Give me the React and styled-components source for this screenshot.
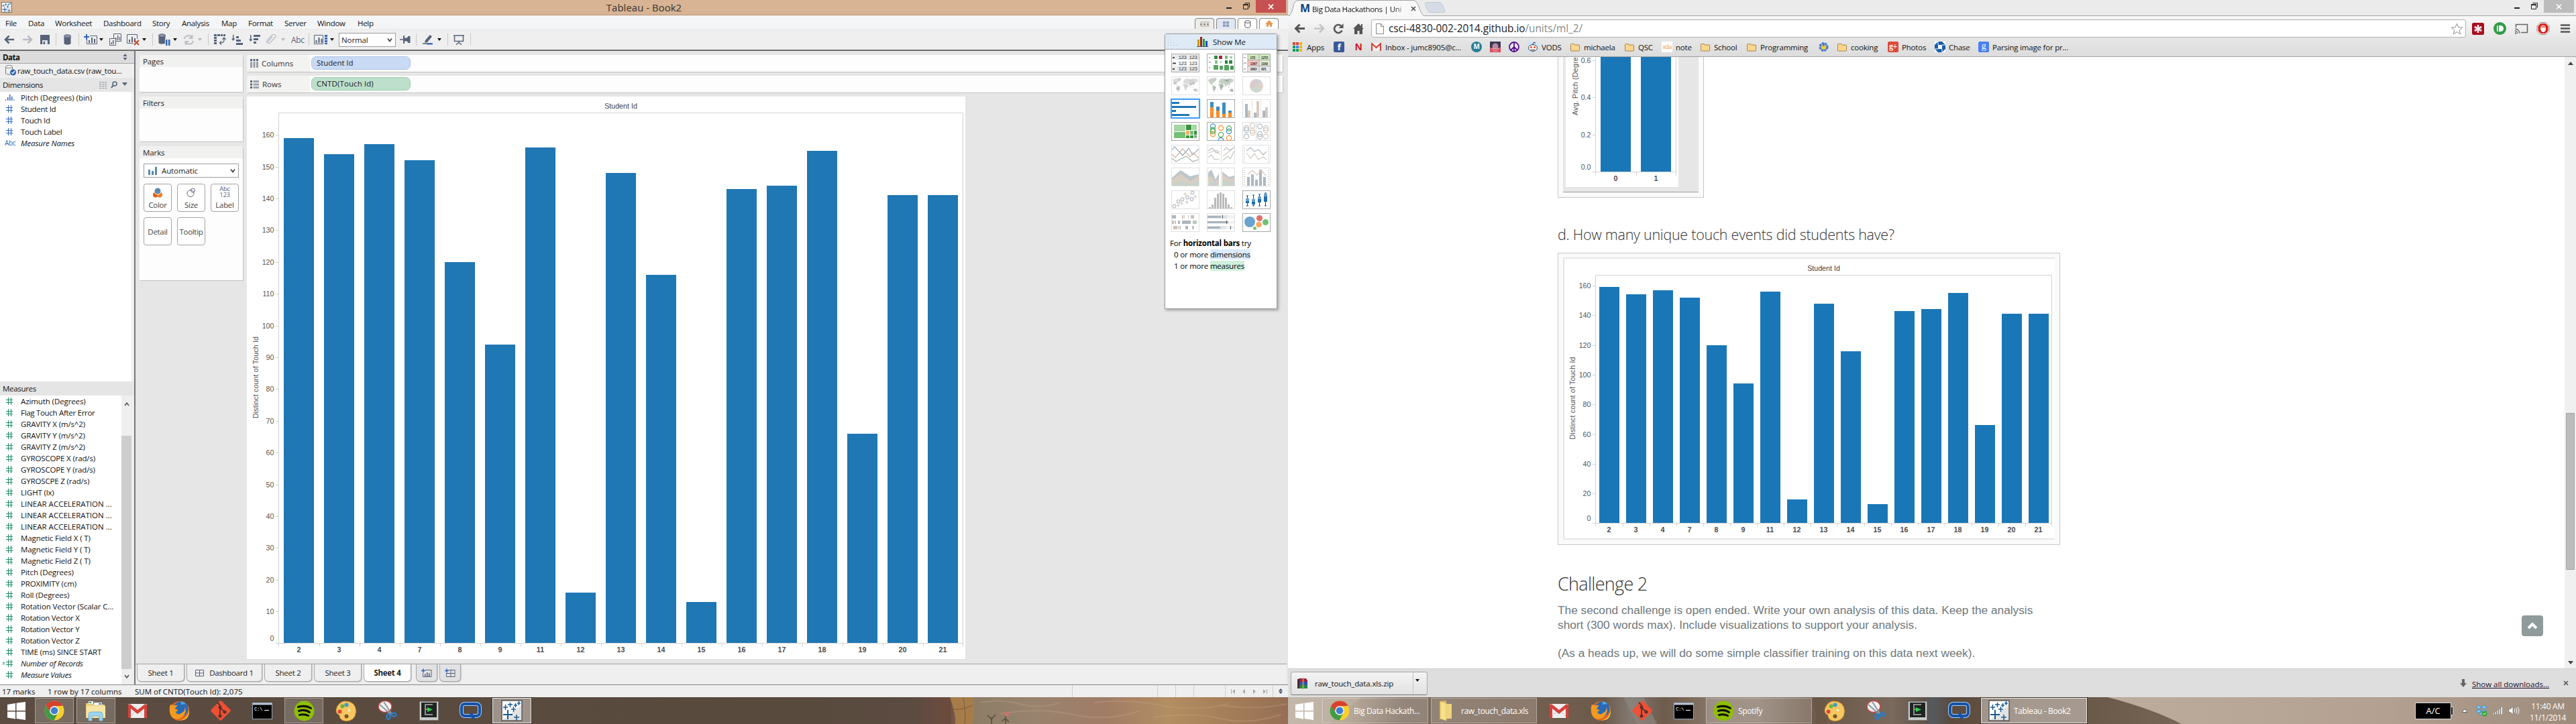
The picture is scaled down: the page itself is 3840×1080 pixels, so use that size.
import React from "react";
import styled, { createGlobalStyle, css } from "styled-components";

const Global = createGlobalStyle`
  * { box-sizing: border-box; }
  body { margin: 0; background: #fff; overflow: hidden; }
  svg { display: block; flex: none; }
`;

const ui = `"Open Sans", "Noto Sans", sans-serif`;
const arial = `"Liberation Sans", Arial, sans-serif`;

/* ---------- shell ---------- */
const Desktop = styled.div`
  display: flex; width: 3840px; height: 1080px; overflow: hidden;
  font: 11.5px/17px ${ui}; letter-spacing: -0.3px; color: #111; white-space: nowrap;
`;
const Monitor = styled.div`
  width: 1920px; height: 1080px; display: flex; flex-direction: column; position: relative;
`;
const Spacer = styled.div`flex: 1;`;

/* ---------- window buttons ---------- */
const WinButtons = styled.div`
  display: flex; height: 19px; align-items: center; margin-left: auto; align-self: flex-start;
`;
const CloseBox = styled.div`
  width: 45px; height: 19px; background: ${(p) => p.$bg}; display: flex; align-items: center; justify-content: center;
`;
const WindowControls = ({ bg }) => (
  <WinButtons>
    <svg width="44" height="19">
      <rect x="0" y="11" width="8" height="2" fill="#222" />
      <path d="M25.500 6.500h7v7h-7z M25.500 7.500h7 M27.500 4.500h7v7" fill="none" stroke="#222" />
    </svg>
    <CloseBox $bg={bg}>
      <svg width="9" height="8"><path d="M1 .5L8 7.500M8 .5L1 7.500" stroke="#fff" strokeWidth="1.700" /></svg>
    </CloseBox>
  </WinButtons>
);

/* ---------- Tableau chrome ---------- */
const TitleBar = styled.div`
  height: 23px; flex: none; background: #d8b494; border-bottom: 1px solid #b99678;
  display: flex; align-items: center; padding: 0 3px 0 2px;
`;
const Title = styled.div`
  flex: 1; text-align: center; font-size: 14.800px; letter-spacing: 0.1px; color: #333; padding-left: 74px;
`;
const MenuBar = styled.div`
  height: 20px; flex: none; background: #f4f5f7; display: flex; align-items: center; padding: 2px 14px 0 8px;
`;
const MenuItem = styled.div`width: ${(p) => p.$w}px;`;
const CornerTabs = styled.div`display: flex; gap: 3px; margin-left: auto; align-self: flex-end;`;
const CornerTab = styled.div`
  width: 29px; height: 16px; border: 1px solid #8a877f; border-bottom: 0; border-radius: 4px 4px 0 0;
  background: ${(p) => p.$bg}; display: flex; align-items: center; justify-content: center;
`;
const ToolBar = styled.div`
  height: 33px; flex: none; background: #efefef; border-top: 1px solid #e9e9e9; border-bottom: 2px solid #706c6f;
  display: flex; align-items: center;
`;
const Tool = styled.div`margin-left: ${(p) => p.$ml}px; flex: none; ${(p) => p.$dim && "opacity:.35;"}`;
const Sep = styled.div`margin-left: ${(p) => p.$ml}px; width: 1px; height: 18px; background: #c9c9c9;`;
const AbcTool = styled.div`margin-left: ${(p) => p.$ml}px; color: #56637a; width: 21px; font-size: 12px;`;
const Caret = styled.div`
  margin-left: ${(p) => p.$ml}px; width: 0; height: 0; border: 3px solid transparent;
  border-top: 4px solid ${(p) => (p.$dim ? "#b5b5b5" : "#111")}; border-bottom: 0;
`;
const Select = styled.div`
  margin-left: ${(p) => p.$ml || 0}px; width: ${(p) => p.$w}px; height: 21px; border: 1px solid #9b9da1; background: #fff;
  display: flex; align-items: center; justify-content: space-between; padding: 0 4px 0 ${(p) => p.$pl || 3}px;
  color: #222; letter-spacing: -0.1px;
`;
const SelectLabel = styled.div`display: flex; align-items: center; gap: 6px;`;
const Chevron = () => (
  <svg width="8" height="7"><path d="M1 1.500L4 5.500L7 1.500" fill="none" stroke="#444" strokeWidth="1.700" /></svg>
);

const S = "#56637a";
const BLUE = "#2f66b8";
const miniBars = (x, y, c = S) => (
  <g fill={c}>
    <rect x={x} y={y + 4} width="2" height="4" />
    <rect x={x + 4} y={y} width="2" height="8" />
    <rect x={x + 8} y={y + 2} width="2" height="6" />
  </g>
);
const Arrow = ({ flip }) => (
  <svg width="16" height="14">
    <path d={flip ? "M1 7H14M8.500 1.500L14 7L8.500 12.500" : "M15 7H2M7.500 1.500L2 7L7.500 12.500"} fill="none" stroke={S} strokeWidth="2.600" />
  </svg>
);
const Cyl = ({ pause }) => (
  <svg width={pause ? 18 : 12} height={pause ? 19 : 16}>
    <path d="M0.500 3.500v10c0 3 10 3 10 0v-10z" fill={S} />
    <ellipse cx="5.500" cy="3" rx="5" ry="2.200" fill="#8a94a5" stroke={S} />
    {pause && <path d="M10 8h8v11h-8z" fill="#efefef" />}
    {pause && <path d="M11 9h2.500v9H11zM15 9h2.500v9H15z" fill={BLUE} />}
  </svg>
);
const ToolIcons = {
  save: (
    <svg width="14" height="14"><path d="M0 0h14v14H0z" fill={S} /><path d="M3 8h8v6H3z" fill="#dfe3ea" /><path d="M4.500 10h2.500v4H4.500z" fill={S} /></svg>
  ),
  newSheet: (
    <svg width="21" height="18">
      <path d="M9 3.500h10.500v12H4.500V9" fill="none" stroke={S} />{miniBars(7, 6)}
      <path d="M0 5h8M4 1v8" stroke={BLUE} strokeWidth="2" />
    </svg>
  ),
  dup: (
    <svg width="18" height="18">
      <path d="M6.500 .5h11v11h-11z" fill="#efefef" stroke={S} />
      <path d="M9 6h1.500v4H9zM12 3h1.500v7H12zM15 5h1.200v5H15z" fill={S} />
      <path d="M.5 7.500h9v10h-9z" fill="#efefef" stroke={S} />
      <path d="M2.500 13H4v3H2.500zM5 10h1.500v6H5z" fill={S} />
    </svg>
  ),
  clear: (
    <svg width="20" height="18">
      <path d="M15.500 8V1.500H.5v13H10" fill="none" stroke={S} />{miniBars(3, 5)}
      <path d="M11 10l7 7M18 10l-7 7" stroke="#c04a2c" strokeWidth="2" />
    </svg>
  ),
  refresh: (
    <svg width="17" height="15"><path d="M2 6a6 6 0 0 1 11-2M15 9a6 6 0 0 1-11 2M13.500 0v5h-5M3.500 15v-5h5" fill="none" stroke={S} strokeWidth="2" /></svg>
  ),
  swap: (
    <svg width="18" height="16" fill={S}>
      <path d="M0 0h4v3H0zM5 0h4v3H5zM10 0h3v3h-3zM14 0h3v3h-3zM0 4h4v3H0zM0 8h4v3H0zM0 12h4v3H0z" />
      <path d="M15 5v4q0 4-6 4M12.500 8L15 5l2.500 3M11 10.500L8.500 13l2.500 2.500" fill="none" stroke={S} strokeWidth="1.300" />
    </svg>
  ),
  asc: (
    <svg width="18" height="15" fill={S}><path d="M3 0h1.500v7H3zM1 5.500h5.500L3.700 9zM8 2h4v3H8zM8 7h7v3H8zM8 12h10v3H8z" /></svg>
  ),
  desc: (
    <svg width="18" height="15" fill={S}><path d="M3 0h1.500v9H3zM1 6.500h5.500L3.700 10zM8 0h10v3H8zM8 5h7v3H8zM8 10h4v3H8z" /></svg>
  ),
  clip: (
    <svg width="16" height="16"><path d="M10 3.500L3.500 11a1.800 1.800 0 0 0 2.500 2.500L14 5a2.600 2.600 0 0 0-4-4L2 9.500a3.500 3.500 0 0 0 0 4" fill="none" stroke={S} strokeWidth="1.300" /></svg>
  ),
  fit: (
    <svg width="20" height="16">
      <path d="M.5 1.500h13v13H.5z" fill="none" stroke={S} />{miniBars(2.500, 5)}
      <path d="M16 1h4v3h-4zM16 5h4v3h-4zM16 9h4v3h-4zM16 13h4v2h-4z" fill={BLUE} />
    </svg>
  ),
  pin: (
    <svg width="16" height="12" fill={S}><path d="M0 5.300h5v1.500H0zM5 0h2v12H5zM7 3.500h5v5H7zM11 2.500h1.500v7H11zM12 1h3.500v10H12z" /></svg>
  ),
  marker: (
    <svg width="16" height="16"><path d="M3 13L4 9L11 1l3 2.500L7 12z" fill={S} /><path d="M0 14h14" stroke={S} strokeWidth="1.500" /><path d="M6 14.500h9" stroke={BLUE} strokeWidth="2" /></svg>
  ),
  present: (
    <svg width="16" height="15"><path d="M0 1h16M1.500 1.500v8h13v-8M8 10v2M4 14.500l4-3l4 3" fill="none" stroke={S} strokeWidth="1.500" /></svg>
  ),
};

const TableauLogo = ({ w, h }) => (
  <svg width={w} height={h} viewBox="0 0 32 32" preserveAspectRatio="none">
    <rect x="1" y="1" width="30" height="30" fill="#fdfdfd" stroke="#555" strokeWidth="1.500" />
    <path d="M2 30L30 8v22z" fill="#e2e2e2" />
    <path d="M3 22h14M10 15v14" stroke="#1a5a94" strokeWidth="2" fill="none" />
    <path d="M19 26h8M23 22v9M3 11h7M6.500 7v8M10 7h7M13.500 4v7M15 14h7M18.500 10v8M19 8h5M21.500 5v6M24 5h5M26.500 2v6" stroke="#1a5a94" strokeWidth="1.500" fill="none" />
  </svg>
);

/* ---------- Tableau body ---------- */
const Body = styled.div`display: flex; flex: none; height: 945px;`;
const DataPane = styled.div`
  width: 202px; flex: none; background: #efefef; border-right: 2px solid #77777b; display: flex; flex-direction: column;
`;
const PaneHead = styled.div`
  height: ${(p) => p.$h}px; flex: none; background: ${(p) => p.$bg}; padding: 0 10px 0 4px; display: flex; align-items: center;
  ${(p) => p.$bold && "font-weight: 700; border-bottom: 1px solid #a5a5a5; letter-spacing:-.45px;"}
`;
const SourceRow = styled.div`height: 21px; flex: none; display: flex; align-items: center; padding-left: 8px; gap: 1px; letter-spacing: -0.25px;`;
const FieldList = styled.div`
  height: ${(p) => p.$h}px; flex: none; width: 196px; background: #fff; display: flex; justify-content: space-between;
`;
const Field = styled.div`
  height: 17px; display: flex; align-items: center; font-style: ${(p) => (p.$i ? "italic" : "normal")};
  letter-spacing: ${(p) => p.$ls ?? -0.3}px;
`;
const FieldIcon = styled.div`
  width: 31px; padding-left: ${(p) => p.$pl || 9}px; color: ${(p) => p.$c}; font-size: 10px; font-style: normal; letter-spacing: -.3px;
`;
const HashSvg = styled.svg`margin-left: -5px;`;
const Track = styled.div`
  width: 15px; background: #efefef; display: flex; flex-direction: column; align-items: center; padding: 9px 0 7px;
`;
const Thumb = styled.div`width: 15px; margin-top: 44px; height: 354px; background: #cdcdcd;`;
const Hash = ({ c, eq }) => (
  <HashSvg width="16" height="11" viewBox="4 0 16 11">
    <path d="M9 3.500h10M9 7.500h10M12.500 0v11M16.500 0v11" stroke={c} fill="none" />
    {eq && <path d="M4 4.500h3M4 6.500h3" stroke={c} />}
  </HashSvg>
);
const spacingOf = (t) => {
  if (/^[A-Z]{4}/.test(t)) return t.startsWith("LINEAR") ? 0 : -0.15;
  return t.includes("(") ? -0.1 : -0.3;
};

const Canvas = styled.div`flex: 1; background: #e6e6e6; display: flex; flex-direction: column;`;
const Work = styled.div`display: flex; height: 914px; padding: 6px 8px 0 6px; gap: 6px;`;
const Shelves = styled.div`width: 154px; display: flex; flex-direction: column; gap: 7px;`;
const Card = styled.div`
  height: ${(p) => p.$h}px; background: #fdfdfd; border-radius: 4px 4px 0 0; box-shadow: 1px 1px 0 #c2c2c2;
`;
const CardHead = styled.div`
  height: 18px; background: #f1f1f0; border-radius: 4px 4px 0 0; padding: 1px 5px; color: #222; letter-spacing: -0.1px;
`;
const CardBody = styled.div`padding: 8px 6px; display: flex; flex-direction: column; gap: 9px;`;
const MarkGrid = styled.div`display: grid; grid-template-columns: repeat(3, 42px); gap: 8px;`;
const MarkButton = styled.div`
  height: 42px; border: 1px solid #a3a3a3; border-radius: 4px; background: #fff; color: #444; display: flex; flex-direction: column;
  align-items: center; justify-content: ${(p) => (p.$icon ? "flex-end" : "center")}; padding-bottom: ${(p) => (p.$icon ? 1 : 0)}px;
`;
const AbcGlyph = styled.div`font-size: 9.500px; line-height: 8.500px; color: ${S}; text-align: center; padding-bottom: 2px;`;
const Main = styled.div`flex: 1; display: flex; flex-direction: column; gap: 6px;`;
const Shelf = styled.div`
  height: 25px; flex: none; background: #fdfdfd; display: flex; align-items: center; box-shadow: 1px 1px 0 #c2c2c2; border-radius: 4px 0 0 0;
`;
const ShelfLabel = styled.div`
  width: 94px; height: 25px; background: #f3f3f1; border-radius: 4px 0 0 0; display: flex; align-items: center; gap: 5px; padding-left: 5px; color: #333; letter-spacing: 0;
`;
const Pill = styled.div`
  margin: 0 0 2px 2px; width: 148px; height: 20px; border-radius: 7px; padding-left: 7px; line-height: 18px; color: #222; letter-spacing: ${(p) => p.$ls ?? -0.1}px;
  background: ${(p) => p.$bg}; border: 1px solid ${(p) => p.$bd};
`;
const Sheet = styled.div`width: 1071px; height: 839px; background: #fff;`;

const TabBar = styled.div`
  height: 30px; flex: none; margin-right: 2px; background: #efefef; border-top: 1px solid #a3a3a3; display: flex; padding-left: 2px; gap: 3px;
`;
const Tab = styled.div`
  width: ${(p) => p.$w}px; height: 26px; border: 1px solid #a8a8a8; border-top: 0; border-radius: 0 0 6px 6px; margin-left: ${(p) => p.$ml || 0}px;
  background: ${(p) => (p.$on ? "#fff" : p.$dark ? "#e2e2e4" : "#efefef")}; font-weight: ${(p) => (p.$on ? 700 : 400)};
  display: flex; align-items: center; justify-content: center; gap: 8px; color: #222; box-shadow: 1px 1px 0 #c9c9c9;
`;
const Status = styled.div`
  height: 19px; flex: none; background: #efefef; border-top: 1px solid #8d8d8d; display: flex; align-items: center; letter-spacing: 0;
`;
const StatusCell = styled.div`
  width: ${(p) => p.$w}px; height: 18px; padding-left: ${(p) => p.$pl || 0}px; flex: none; display: flex; align-items: center;
  border-left: ${(p) => (p.$line ? "1px solid #cfcfcf" : "0")};
`;

/* ---------- charts ---------- */
const IDS = [2, 3, 4, 7, 8, 9, 11, 12, 13, 14, 15, 16, 17, 18, 19, 20, 21];
const VALS = [159, 154, 157, 152, 120, 94, 156, 16, 148, 116, 13, 143, 144, 155, 66, 141, 141];

function BarChart({ w, h, left, right, top, base, unit, step, max, barW, fill, title, axis, axisX, axisY, labels, values, fmt = (v) => v, axisLen }) {
  const pitch = (right - left) / labels.length;
  const ticks = [];
  for (let i = 1; i * step <= max + 1e-6; i++) ticks.push(i * step);
  return (
    <svg width={w} height={h} fontFamily={arial} fontSize="10.700" letterSpacing="0" fill="#555">
      {title && <text x={(left + right) / 2} y={top - 7} textAnchor="middle" fill="#444">{title}</text>}
      <path d={`M${left} ${base}V${top}H${right}V${base + 5}M${left - 5} ${base}H${right}M${left} ${base}v5`} fill="none" stroke="#d2d2d2" />
      {ticks.map((t) => {
        const y = Math.round(base - t * unit) + 0.5;
        return (
          <g key={t}>
            <path d={`M${left - 5} ${y}h5`} stroke="#d2d2d2" />
            <text x={left - 7} y={y + 3.500} textAnchor="end">{fmt(t)}</text>
          </g>
        );
      })}
      <text x={left - 7} y={base - 3.500} textAnchor="end">{fmt(0)}</text>
      {labels.map((l, i) => {
        const x = Math.round(left + pitch * i + (pitch - barW) / 2);
        const y = Math.round(base - values[i] * unit);
        return (
          <g key={l}>
            <rect x={x} y={y} width={barW} height={Math.max(0, base - 0.5 - y)} fill={fill} />
            {i > 0 && <path d={`M${Math.round(left + pitch * i) + 0.5} ${base}v5`} stroke="#d2d2d2" />}
            <text x={left + pitch * (i + 0.5)} y={base + 13.500} textAnchor="middle" fontWeight="700" fill="#4a4a4a">{l}</text>
          </g>
        );
      })}
      <text transform={`translate(${axisX} ${axisY}) rotate(-90)`} textAnchor="middle" textLength={axisLen}>{axis}</text>
    </svg>
  );
}

/* ---------- Show Me ---------- */
const ShowMe = styled.div`
  position: absolute; left: 1736px; top: 50px; width: 168px; height: 411px; background: #fff; border: 1px solid #9a9a9a;
  border-radius: 3px 3px 0 0; box-shadow: 2px 2px 4px rgba(0,0,0,.3);
`;
const ShowMeHead = styled.div`
  height: 23px; background: #deebf6; border-bottom: 1px solid #9fa9b2; display: flex; align-items: center; gap: 7px; padding-left: 4px; letter-spacing: 0;
`;
const Thumbs = styled.div`display: grid; grid-template-columns: repeat(3, 42px); gap: 6px 11px; padding: 6px 0 0 9px;`;
const ThumbBox = styled.div`
  height: 28px; border: 1px solid ${(p) => (p.$state === "off" ? "#e0e0e0" : "#a9a9a9")};
  ${(p) => p.$state === "sel" && css`border-color: #3d9bff; box-shadow: 0 0 0 1px #4ba3ff, 0 0 3px #4ba3ff;`}
  & > svg { margin: -1px; }
`;
const Help = styled.div`padding: 8px 0 0 7px; letter-spacing: -0.2px; color: #000;`;
const HelpLine = styled.div`padding-left: 6px;`;
const Mark = styled.span`background: ${(p) => p.$bg};`;

const G = ["#b4bcc4", "#d6c9bf", "#bccabc"];
const Tsvg = ({ children }) => <svg width="42" height="28">{children}</svg>;
const rects = (list) => list.map(([x, y, w, h, c], i) => <rect key={i} x={x} y={y} width={w} height={h} fill={c} />);
const rings = (list) => list.map(([x, y, c], i) => <circle key={i} cx={x} cy={y} r="3.600" fill="none" stroke={c} strokeWidth="1.200" />);
const line = (pts, c, w = 1.200) => <polyline points={pts} fill="none" stroke={c} strokeWidth={w} />;
const world = (c, d) => (
  <>
    <path d="M2 5l4-2 7-1 2 2-2 3-3 2-2 2 1 2-3-1-3-4zM9 13l5 2-1 4-2 4-2-2-1-5zM18 7l2-3 4-1 4 1 8-1 4 2-1 3-4 2-1 4-2-2-2 1-2 3-2-5-4 0-2-1-2 0zM18 11l6 0 2 3-3 4-1 3-2-1-1-5-2-2zM34 19l4-1 2 3-2 2-4-1z" fill={c} />
    <path d="M20 12l4 1-2 6-2-3zM26 5l8-1-2 4-4 0zM10 15l3 1-2 5zM36 19l3 1v3l-3-1zM31 14l2 2v2z" fill={d} />
  </>
);
const THUMBS = [
  ["on", <Tsvg><rect x="1" y="1" width="40" height="8" fill="#ececec" /><rect x="1" y="18" width="40" height="9" fill="#ececec" />
    <g fontFamily={'"Liberation Mono", monospace'} fontSize="7.500" letterSpacing="-.5" fill="#333">{[8, 17, 25].map((y) => <React.Fragment key={y}><text x="10.500" y={y}>123</text><text x="26.500" y={y}>123</text></React.Fragment>)}</g>
    {rects([[2, 5, 3, 2, "#444"], [2, 13.500, 5, 2, "#444"], [2, 22, 3, 2, "#444"]])}</Tsvg>],
  ["on", <Tsvg>{rects([[3, 5, 2, 2, "#bbb"], [3, 12, 3, 2, "#bbb"], [3, 20, 2, 2, "#bbb"], [11, 3, 5, 5, "#2f8a45"], [18, 3, 5, 5, "#b3233b"], [27, 3, 4, 5, "#7cb77c"], [34, 4, 4, 3, "#9ccb9c"], [12, 10, 4, 5, "#8cc08a"], [20, 11, 2, 3, "#9ccb9c"], [27, 10, 4, 5, "#1f7d3d"], [33, 10, 5, 5, "#2f8a45"], [10, 17, 7, 7, "#57a562"], [19, 18, 5, 6, "#57a562"], [26, 17, 7, 8, "#57a562"], [35, 18, 5, 6, "#3f9950"]])}</Tsvg>],
  ["on", <Tsvg>{rects([[8, 1, 33, 9, "#cde8bf"], [8, 10, 17, 9, "#f9c3c3"], [25, 10, 16, 9, "#dcebd2"], [8, 19, 33, 8, "#ebebeb"], [2, 5, 3, 2, "#bbb"], [2, 13, 4, 2, "#bbb"], [2, 22, 3, 2, "#bbb"]])}
    <path d="M8 0v28M25 0v28M8 9.500h34M8 18.500h34" stroke="#aaa" />
    <g fontFamily={arial} fontSize="5" fill="#333" fontWeight="700">{[["172", 8], ["1367", 17], ["2882", 25]].map(([t, y]) => <text key={y} x="11.500" y={y}>{t}</text>)}{[["1272", 8], ["1160", 17], ["821", 25]].map(([t, y]) => <text key={y} x="28" y={y}>{t}</text>)}</g></Tsvg>],
  ["off", <Tsvg>{world("#dcdcdc", "#d2d2d2")}<g fill="#b5bec8"><circle cx="5" cy="10" r="1.800" /><circle cx="10" cy="18" r="2.600" /><circle cx="12" cy="5" r="1.300" /><circle cx="29" cy="11" r="1.800" /><circle cx="33" cy="10" r="1.800" /><circle cx="35" cy="20" r="1.800" /></g></Tsvg>],
  ["off", <Tsvg>{world("#c6d0c6", "#a3b0a5")}</Tsvg>],
  ["off", <Tsvg><circle cx="21" cy="14" r="10" fill="#dfd0c8" /><path d="M21 14V4a10 10 0 0 1 7 3z" fill="#c9ced8" /><path d="M21 14V4a10 10 0 0 0-9.500 13z" fill="#ddc9cb" /><path d="M21 14L11.500 17a10 10 0 0 0 16 4.500z" fill="#ccd7cb" /></Tsvg>],
  ["sel", <Tsvg>{rects([[1, 4, 11, 3, "#1f77b4"], [1, 10, 36, 3, "#1f77b4"], [1, 16, 6, 3, "#1f77b4"], [1, 22, 26, 3, "#1f77b4"]])}</Tsvg>],
  ["on", <Tsvg>{rects([[5, 4, 5, 8, "#3f8cc2"], [5, 12, 5, 15, "#ff8d28"], [14, 11, 5, 6, "#3f8cc2"], [14, 17, 5, 10, "#ff8d28"], [23, 5, 5, 17, "#3f8cc2"], [23, 22, 5, 5, "#ff8d28"], [32, 17, 5, 3, "#3f8cc2"], [32, 20, 5, 7, "#ff8d28"]])}</Tsvg>],
  ["off", <Tsvg>{rects([[4, 7, 4, 20, "#aeb8c0"], [8, 17, 4, 10, "#d8cabf"], [14, 1, 1, 26, "#e2e2e2"], [17, 20, 4, 7, "#aeb8c0"], [21, 3, 4, 24, "#d8cabf"], [27, 1, 1, 26, "#e2e2e2"], [30, 17, 4, 10, "#aeb8c0"], [34, 12, 4, 15, "#d8cabf"]])}</Tsvg>],
  ["on", <Tsvg>{rects([[4, 4, 17, 10, "#a5d6a4"], [4, 15, 17, 9, "#74c073"], [22, 4, 8, 8, "#3a923b"], [31, 4, 7, 8, "#a5d6a4"], [22, 13, 5, 6, "#ffa95c"], [28, 13, 5, 6, "#74c073"], [34, 13, 4, 6, "#3a923b"], [22, 20, 5, 4, "#3a923b"], [28, 20, 5, 4, "#3a923b"], [34, 20, 4, 2, "#3a923b"], [34, 23, 4, 1, "#3a923b"]])}</Tsvg>],
  ["on", <Tsvg>{rings([[9, 6.500, "#3f8cc2"], [9, 11.500, "#4fae50"], [9, 18, "#ff8d28"], [9, 14, "#4fae50"], [21, 9, "#ff8d28"], [21, 19, "#4fae50"], [21, 27, "#3f8cc2"], [33, 9.500, "#4fae50"], [33, 14, "#3f8cc2"], [33, 24, "#ff8d28"]])}</Tsvg>],
  ["off", <Tsvg>{rings([[6, 9, G[0]], [6, 12, G[0]], [6, 21.500, G[0]], [15, 5.500, G[1]], [15, 13, G[1]], [15, 16, G[1]], [26, 6.500, G[0]], [26, 18, G[0]], [26, 22, G[0]], [35, 9, G[1]], [35, 12, G[1]], [35, 21.500, G[1]]])}<path d="M20.500 1v26" stroke="#ddd" /></Tsvg>],
  ["off", <Tsvg>{line("1,8 5,3 17,16 26,5 32,15 41,6", "#9caab6")}{line("1,14 6,19 17,6 28,18 33,12 41,20", "#cdb9aa")}{line("1,20 7,25 22,17 32,25 41,22", "#a5b8a6")}</Tsvg>],
  ["off", <Tsvg>{line("2,9 8,5 14,12 19,10", G[0])}{line("2,12 8,10 14,8 19,14", G[1])}{line("2,19 7,15 12,22 19,21", G[2])}{line("25,9 29,4 34,8 41,4", G[0])}{line("24,17 31,12 36,8 41,3", G[1])}{line("24,23 31,17 35,21 41,9", G[2])}<path d="M21.500 1v26" stroke="#ddd" /></Tsvg>],
  ["off", <Tsvg>{line("6,9 12,4 18,10 24,7 31,15 36,10", G[0])}{line("6,12 12,20 18,13 24,22 31,18 36,22", G[1])}<path d="M3 4v22M39 4v22" stroke="#ccc" strokeWidth="2" strokeDasharray="1 2" /></Tsvg>],
  ["off", <Tsvg><path d="M1 15L14 4L28 13L41 10V27H1z" fill="#bcc5cb" /><path d="M1 18L14 9L28 20L41 12V27H1z" fill="#dacdc2" /><path d="M1 24L14 19L28 24L41 20V27H1z" fill="#c8d2c9" /></Tsvg>],
  ["off", <Tsvg><path d="M2 7L7 3L13 18L18 8V27H2zM23 6L33 14L41 12V27H23z" fill="#bcc5cb" /><path d="M2 15L6 12L13 21L18 15V27H2zM23 9L34 17L41 15V27H23z" fill="#dacdc2" /><path d="M2 22L8 19L18 25V27H2zM23 18L34 22L41 19V27H23z" fill="#c8d2c9" /><path d="M21.500 1v26" stroke="#ddd" /></Tsvg>],
  ["off", <Tsvg>{rects([[7, 14, 4, 13, "#aeb8c0"], [13, 10, 4, 17, "#aeb8c0"], [19, 18, 4, 9, "#aeb8c0"], [25, 3, 4, 24, "#aeb8c0"], [31, 14, 4, 13, "#aeb8c0"]])}{line("8,10 15,4 22,11 28,4 35,12", G[1])}<path d="M3 4v22M39 4v22" stroke="#d5ccc4" strokeWidth="2" strokeDasharray="1 2" /></Tsvg>],
  ["off", <Tsvg><g fill="none" stroke={G[0]}>{[[4.500, 23.500], [10.500, 16.500], [16.500, 13.500], [24, 10.500], [30.500, 13], [31.500, 3.500]].map(([x, y]) => <circle key={x} cx={x} cy={y} r="2.300" strokeWidth="1.200" />)}</g>
    <path d="M18 5.500h5M20.500 3v5M33 9.500h5M35.500 7v5M21 17.500h5M23.500 15v5M13 19.500h5M15.500 17v5M8 22.500h5M10.500 20v5" stroke={G[1]} strokeWidth="1.200" /></Tsvg>],
  ["off", <Tsvg>{rects([2, 6, 16, 22, 24, 22, 16, 6, 2].map((v, i) => [3 + i * 4, 27 - v, 3, v, "#bababa"]))}</Tsvg>],
  ["on", <Tsvg>{[[7, 8, 12, 18], [16, 7, 13, 20], [25, 6, 9, 17], [34, 4, 5, 16]].map(([x, a, b, c]) => <g key={x}><path d={`M${x + 0.500} ${a}V23M${x - 1} ${a}h3M${x - 1} 23h3`} stroke="#1b4a73" /><rect x={x - 2} y={b} width="5" height="4" fill="#6ba3d0" /><rect x={x - 2} y={b + 4} width="5" height={c - b - 3} fill="#1f6fb0" /></g>)}</Tsvg>],
  ["off", <Tsvg>{rects([[1, 3, 6, 5, "#aeb8c0"], [16, 3, 2, 5, "#cdbfb8"], [19, 3, 1, 5, "#cdbfb8"], [25, 3, 1, 5, G[2]], [29, 3, 5, 5, "#cdbfb8"], [1, 11, 3, 5, "#cdbfb8"], [5, 11, 2, 5, G[2]], [10, 11, 3, 5, "#aeb8c0"], [16, 11, 13, 5, "#aeb8c0"], [32, 11, 6, 5, G[2]], [3, 19, 6, 5, "#cdbfb8"], [10, 19, 1, 5, "#cdbfb8"], [12, 19, 2, 5, G[2]], [21, 19, 4, 5, "#aeb8c0"], [31, 19, 3, 5, "#cdbfb8"]])}</Tsvg>],
  ["off", <Tsvg>{rects([[1, 3, 40, 5, "#f1f2f3"], [1, 3, 30, 5, "#dfe3e6"], [1, 4, 20, 3, "#a9b4bc"], [23, 3, 1, 5, "#555"], [1, 11, 40, 5, "#f1f2f3"], [1, 12, 31, 3, "#a9b4bc"], [29, 11, 1, 5, "#555"], [1, 19, 40, 5, "#f1f2f3"], [1, 19, 27, 5, "#dfe3e6"], [1, 20, 19, 3, "#a9b4bc"], [35, 19, 1, 5, "#555"]])}</Tsvg>],
  ["on", <Tsvg><circle cx="11" cy="13" r="8" fill="#6aa3d0" /><circle cx="25.500" cy="7.500" r="4.600" fill="#e67070" /><circle cx="34.500" cy="13.500" r="4.500" fill="#72c172" /><circle cx="24.500" cy="17" r="4.200" fill="#ffa95c" /><circle cx="18.500" cy="22.500" r="2.500" fill="#72c172" /></Tsvg>],
];

/* ---------- taskbar ---------- */
const Bar = styled.div`
  height: 40px; flex: none; position: relative; overflow: hidden; display: flex; align-items: center; background: ${(p) => p.$bg};
`;
const Scenery = styled.div`position: absolute; inset: 0; & > svg { position: absolute; right: 0; top: 0; }`;
const StartSlot = styled.div`
  position: relative; width: ${(p) => p.$w}px; height: 40px; padding-left: 11px; display: flex; align-items: center;
  background: ${(p) => (p.$lit ? "rgba(255,255,255,.2)" : "none")};
`;
const Slots = styled.div`position: relative; display: flex; gap: 4px;`;
const Slot = styled.div`
  width: ${(p) => (p.$text ? 158 : 58)}px; height: 38px; display: flex; align-items: center; gap: 6px; color: #fff; font-size: 12px; letter-spacing: -0.35px;
  justify-content: ${(p) => (p.$text ? "flex-start" : "center")}; padding-left: ${(p) => (p.$text ? 10 : 0)}px;
  ${(p) => p.$open && css`background: rgba(255,255,255,.18); border: 1px solid rgba(255,255,255,.35);`}
  ${(p) => p.$active && css`background: rgba(225,220,215,.5); border: 1px solid #efeae4; outline: 1px solid #3a322c;`}
`;
const Tray = styled.div`position: relative; margin-left: auto; display: flex; align-items: center;`;
const Battery = styled.div`
  width: 54px; height: 25px; background: #000; border: 1px solid #ddd; color: #fff; text-align: center; line-height: 23px; font-size: 13px; letter-spacing: 0;
`;
const BatteryTip = styled.div`width: 3px; height: 13px; background: #111; border: 1px solid #ccc; border-left: 0; margin-right: 12px;`;
const TrayIcon = styled.div`margin-right: ${(p) => p.$mr}px;`;
const Clock = styled.div`width: 54px; text-align: center; color: #fff; font-size: 12px; line-height: 17px; margin-right: 15px; padding-top: 3px;`;

const I = {
  win: <svg width="27" height="27"><path d="M0 4L12 2v11H0zM13.500 1.700L27 0v13H13.500zM0 14.500h12v11L0 23.500zM13.500 14.500H27V27l-13.500-2z" fill="#fff" /></svg>,
  chrome: (
    <svg width="30" height="30" viewBox="-15 -15 30 30">
      <circle r="14.500" fill="#f7cf2c" />
      <path d="M-12.600-7.200A14.500 14.500 0 0 1 12.600-7.200L0-6.500A6.500 6.500 0 0 0-5.600 3.300z" fill="#d8402f" />
      <path d="M-12.600-7.200A14.500 14.500 0 0 0-.5 14.500L5.600 3.300A6.500 6.500 0 0 1-5.600 3.300z" fill="#3f9c46" />
      <circle r="6.800" fill="#f2f2f2" /><circle r="5.300" fill="#3f7fd0" />
    </svg>
  ),
  folder: (
    <svg width="32" height="31"><path d="M1 4h10l2 2h16v20H1z" fill="#e6cd7c" /><path d="M5 1h7v4H5zM13 3h12v4H13z" fill="#f5f5f5" /><path d="M6 2h3v2H6z" fill="#3aa655" /><path d="M20 4h4v2h-4z" fill="#3a86c8" /><path d="M2 8h28v18H2z" fill="#f6e6a4" /><path d="M5 30V21q0-4 4-4h13q4 0 4 4v9h-5v-7H10v7z" fill="#9fd3ee" stroke="#6fb4d8" /></svg>
  ),
  xls: (
    <svg width="28" height="32"><path d="M2 2l10-1v28H2z" fill="#d6b659" /><path d="M3 2l9 3v26l-9-3z" fill="#f5e08d" stroke="#d9bd62" /><path d="M12 6h8v22h-8z" fill="#efd479" /></svg>
  ),
  gmail: (
    <svg width="28" height="21"><rect width="28" height="21" rx="2" fill="#efefef" /><path d="M4 18l8-8M24 18l-8-8" stroke="#c9c9c9" /><path d="M0 2v19h4V7l10 8L24 7v14h4V2q-2-3-4-1L14 9L4 1Q1-1 0 2z" fill="#d5423b" /></svg>
  ),
  firefox: (
    <svg width="31" height="31" viewBox="-15.500 -15.500 31 31"><circle r="14.500" fill="#e0661a" /><circle cx="2" cy="-3" r="11" fill="#2a69b5" /><path d="M2-14a11 11 0 0 1 8 4q-4-1-7 1z" fill="#58a6e0" /><path d="M-14-9q3-1 5 1 4-1 6 0l-4 5q4 0 5 3-4 0-3 3 4 4 8 0 6-3 5-9 3 6-1 12-7 9-16 5-8-6-5-20z" fill="#f39a21" /><path d="M12-9q4 8 0 15-4 7-12 8 14 1 14.500-13z" fill="#f6c13c" /></svg>
  ),
  git: (
    <svg width="32" height="32" viewBox="-16 -16 32 32"><rect x="-11" y="-11" width="22" height="22" rx="2" transform="rotate(45)" fill="#f04f33" /><path d="M-1-8V8M-1-4L6 2M-5-12l4 4" stroke="#54332b" strokeWidth="1.800" fill="none" /><g fill="#54332b"><circle cx="-1" cy="8" r="2.500" /><circle cx="6" cy="2" r="2.500" /><circle cx="-1" cy="-5" r="2.500" /></g></svg>
  ),
  cmd: (
    <svg width="30" height="25"><rect x=".5" y=".5" width="29" height="24" fill="#000" stroke="#9aa7b8" /><rect x="1" y="1" width="28" height="2.500" fill="#b9c6d8" /><text x="3" y="12" fontSize="7.500" fill="#fff" fontFamily={'"Liberation Mono", monospace'} letterSpacing="-.5">C:\</text><path d="M18 11.500h7" stroke="#fff" /></svg>
  ),
  spotify: (
    <svg width="31" height="31" viewBox="-15.500 -15.500 31 31"><circle r="15" fill="#8ebe00" /><path d="M-9-6Q2-9 10-4M-8 0Q1-3 8 2M-7 6Q0 4 6 7" stroke="#111" strokeWidth="3" strokeLinecap="round" fill="none" /></svg>
  ),
  paint: (
    <svg width="31" height="31" viewBox="-15.500 -15.500 31 31"><path d="M-1-14.500Q15-14 15 1Q14 15 0 15Q-8 14-9 9Q-9 5-13 4Q-16 0-13-6Q-9-14-1-14.500z" fill="#f7c65e" stroke="#d99a33" /><circle cx="-5" cy="-7" r="3" fill="#6cb33f" /><circle cx="1" cy="-9" r="3" fill="#3a9ad0" /><circle cx="-9" cy="1" r="3" fill="#e04438" /><circle cx="5" cy="-1" r="2" fill="#e8ecd0" /><circle cx="1" cy="8" r="3" fill="#7a5a2b" /></svg>
  ),
  snip: (
    <svg width="30" height="30"><ellipse cx="12" cy="9" rx="10" ry="8.500" fill="#f2f2f2" stroke="#c44" strokeWidth="1.600" /><path d="M10 2L22 20M4 6l16 14" stroke="#8c96a0" strokeWidth="2" /><g fill="none" stroke="#2c7cc4" strokeWidth="2.500"><ellipse cx="17" cy="24" rx="2.500" ry="4" /><ellipse cx="25" cy="21" rx="3.500" ry="2.500" /></g></svg>
  ),
  ebox: (
    <svg width="29" height="29"><rect x=".5" y=".5" width="28" height="28" fill="#c9c9c9" stroke="#777" /><rect x="3" y="2" width="23" height="22" fill="#1f2422" /><path d="M20 5H9v15h11M9 12h7" stroke="#8b918f" strokeWidth="2" fill="none" /><path d="M12 9l8 3.500-8 3.500z" fill="#2ed146" /></svg>
  ),
  q: (
    <svg width="33" height="27"><rect x="3" y="3" width="27" height="18" rx="5" fill="none" stroke="#a8cdf2" strokeWidth="6" /><rect x="3" y="3" width="27" height="18" rx="5" fill="none" stroke="#1552a8" strokeWidth="4" /><path d="M17 17l4 8" stroke="#1552a8" strokeWidth="4" /></svg>
  ),
};
const START_APPS = (text) => [
  ["chrome", "open", text && "Big Data Hackath..."],
  text ? ["xls", "open", "raw_touch_data.xls"] : ["folder", "open"],
  ["gmail"], ["firefox"], ["git"], ["cmd"],
  ["spotify", "open", text && "Spotify"],
  ["paint"], ["snip"], ["ebox"], ["q"],
];
const Apps = ({ text }) => (
  <Slots>
    {START_APPS(text).map(([k, open, label]) => (
      <Slot key={k} $open={open} $text={label}>{I[k]}{label}</Slot>
    ))}
    <Slot $active $text={text}><TableauLogo w={32} h={32} />{text && "Tableau - Book2"}</Slot>
  </Slots>
);

/* ---------- browser ---------- */
const TabStrip = styled.div`
  height: 24px; flex: none; background: #ebebeb; border-bottom: 1px solid #a5a5a5; display: flex; padding: 0 3px 0 2px; align-items: flex-end;
`;
const ChromeTab = styled.div`
  width: 202px; height: 24px; margin-bottom: -1px; position: relative; display: flex; align-items: center; padding-left: 16px; letter-spacing: -0.35px;
  & > svg:first-child { position: absolute; left: -2px; top: 0; }
`;
const TabBadge = styled.div`position: relative; color: #123f75; font-weight: 700; font-size: 16px; width: 18px;`;
const TabText = styled.div`
  position: relative; width: 137px; padding-top: 2px; -webkit-mask-image: linear-gradient(90deg, #000 88%, rgba(0,0,0,.3)); mask-image: linear-gradient(90deg, #000 88%, rgba(0,0,0,.3));
`;
const TabX = styled.svg`position: relative; margin-left: 10px; margin-top: 2px;`;
const NavBar = styled.div`
  height: 34px; flex: none; background: linear-gradient(#f8f8f8, #e6e6e6); display: flex; align-items: center; padding: 3px 9px 0 9px;
`;
const Nav = styled.div`width: ${(p) => p.$w}px; flex: none;`;
const Omni = styled.div`
  width: 1633px; height: 27px; background: #fff; border: 1px solid #b0b0b0; border-radius: 3px; display: flex; align-items: center; padding: 0 3px 0 6px;
  font-size: 15.400px; letter-spacing: -0.05px; color: #222; gap: 7px;
`;
const Muted = styled.span`color: #8a8a8a;`;
const Bookmarks = styled.div`
  height: 27px; flex: none; background: linear-gradient(#e6e6e6, #dcdcdc); border-bottom: 1px solid #a3a3a3; display: flex; align-items: center; padding: 0 0 2px 7px;
`;
const Bookmark = styled.div`width: ${(p) => p.$w}px; flex: none; display: flex; align-items: center; letter-spacing: -0.2px;`;
const Fav = styled.div`width: 21px; flex: none;`;
const Tile = styled.div`
  width: 16px; height: 16px; background: ${(p) => p.$bg}; color: ${(p) => p.$c || "#fff"}; border-radius: ${(p) => p.$r ?? 2}px; text-align: center;
  font: ${(p) => p.$font || `700 13px/16px ${ui}`}; letter-spacing: -0.5px;
`;
const FolderFav = () => (
  <svg width="16" height="16"><path d="M1.500 4.500q0-1 1-1h4l1 1.500h6q1 0 1 1v7q0 1-1 1h-11q-1 0-1-1z" fill="#fbd68e" stroke="#a8834a" /></svg>
);

const Viewport = styled.div`height: 912px; flex: none; display: flex; background: #fff; position: relative;`;
const Article = styled.div`width: 1903px; padding-left: 402px; overflow: hidden; display: flex; flex-direction: column; align-items: flex-start;`;
const Figure = styled.div`
  width: ${(p) => p.$w}px; height: ${(p) => p.$h}px; flex: none; border: 1px solid #c6c6c6; background: #fafafa; padding: ${(p) => p.$pt}px 7px 7px; ${(p) => p.$cut && "border-top: 0;"}
`;
const Shot = styled.div`
  height: 100%; background: #e6e6e6; padding: ${(p) => p.$p}; & > div { background: #fff; height: 100%; }
  ${(p) => p.$line && "border-bottom: 1px solid #999;"}
`;
const Paper = styled.div`width: ${(p) => p.$w}px; overflow: hidden;`;
const H4 = styled.div`
  margin: 39px 0 11px; height: 32px; font: 300 21.500px/32px ${ui}; letter-spacing: -0.27px; color: #333;
`;
const H3 = styled.div`margin: 39px 0 9px; height: 38px; font: 300 27px/38px ${ui}; letter-spacing: -0.7px; color: #333;`;
const Para = styled.div`margin-bottom: 20px; font: 17.250px/22px ${arial}; letter-spacing: 0; color: #6f787b;`;
const PageScroll = styled.div`
  width: 17px; background: #f0f0f0; display: flex; flex-direction: column; align-items: center; padding: 7px 0 6px;
`;
const PageThumb = styled.div`width: 13px; height: 234px; margin-top: 519px; background: #bcbcbc; border: 1px solid #a5a5a5;`;
const ToTop = styled.div`
  position: absolute; right: 49px; bottom: 48px; width: 32px; height: 31px; border-radius: 4px; background: #8f9a9b; display: flex; align-items: center; justify-content: center;
`;
const Downloads = styled.div`
  height: 43px; flex: none; background: #dedede; border-top: 1px solid #cfcfcf; display: flex; align-items: center; padding: 0 11px 0 4px;
`;
const DownloadItem = styled.div`
  width: 204px; height: 35px; border: 1px solid #a9a9a9; border-bottom-color: #777; border-radius: 3px; background: linear-gradient(#f4f4f4, #e1e1e1);
  display: flex; align-items: center; padding-left: 8px; gap: 10px;
`;
const DownloadName = styled.div`width: 153px; letter-spacing: -0.15px;`;
const DownloadMore = styled.div`align-self: stretch; width: 22px; margin-left: -10px; border-left: 1px solid #c4c4c4; padding: 10px 0 0 3px;`;
const ShowAll = styled.div`text-decoration: underline; margin: 2px 21px 0 8px; color: #210b2b; letter-spacing: 0;`;

const dims = ["Student Id", "Touch Id", "Touch Label"];
const measures = ["Azimuth (Degrees)", "Flag Touch After Error", "GRAVITY X (m/s^2)", "GRAVITY Y (m/s^2)", "GRAVITY Z (m/s^2)", "GYROSCOPE X (rad/s)", "GYROSCOPE Y (rad/s)", "GYROSCPE Z (rad/s)", "LIGHT (lx)", "LINEAR ACCELERATION ...", "LINEAR ACCELERATION ...", "LINEAR ACCELERATION ...", "Magnetic Field X ( T)", "Magnetic Field Y ( T)", "Magnetic Field Z ( T)", "Pitch (Degrees)", "PROXIMITY (cm)", "Roll (Degrees)", "Rotation Vector (Scalar C...", "Rotation Vector X", "Rotation Vector Y", "Rotation Vector Z", "TIME (ms) SINCE START", "Number of Records", "Measure Values"];
const menus = [["File", 34], ["Data", 40], ["Worksheet", 72], ["Dashboard", 73], ["Story", 44], ["Analysis", 59], ["Map", 40], ["Format", 54], ["Server", 49], ["Window", 60], ["Help", 40]];

function TableauWindow() {
  return (
    <Monitor>
      <TitleBar>
        <TableauLogo w={16} h={16} />
        <Title>Tableau - Book2</Title>
        <WindowControls bg="#c75050" />
      </TitleBar>
      <MenuBar>
        {menus.map(([m, w]) => <MenuItem key={m} $w={w}>{m}</MenuItem>)}
        <CornerTabs>
          <CornerTab $bg="#efede9"><svg width="14" height="8"><path d="M0 1h14M0 7h14" stroke="#aaa69b" /><path d="M0 3h3v2.500H0zM5 3h3v2.500H5zM10 3h3v2.500h-3z" fill="#8d897d" /></svg></CornerTab>
          <CornerTab $bg="#dfe6f4"><svg width="9" height="8"><path d="M0 0h4v3.500H0zM5 0h4v3.500H5zM0 4.500h4V8H0zM5 4.500h4V8H5z" fill="#8e9bb0" /></svg></CornerTab>
          <CornerTab $bg="#fff"><svg width="10" height="12"><path d="M.8 2.500v7c0 2.500 8 2.500 8 0v-7" fill="none" stroke="#555" /><ellipse cx="4.800" cy="2.500" rx="4" ry="1.800" fill="none" stroke="#555" /></svg></CornerTab>
          <CornerTab $bg="#fff"><svg width="12" height="11"><path d="M6 0l6 6h-2v4H7V7H5v3H2V6H0z" fill="#e39a51" /></svg></CornerTab>
        </CornerTabs>
      </MenuBar>
      <ToolBar>
        <Tool $ml={6}><Arrow /></Tool>
        <Tool $ml={11} $dim><Arrow flip /></Tool>
        <Tool $ml={11}>{ToolIcons.save}</Tool>
        <Sep $ml={9} />
        <Tool $ml={11}><Cyl /></Tool>
        <Sep $ml={10} />
        <Tool $ml={7}>{ToolIcons.newSheet}</Tool><Caret $ml={2} />
        <Tool $ml={9}>{ToolIcons.dup}</Tool>
        <Tool $ml={8}>{ToolIcons.clear}</Tool><Caret $ml={3} />
        <Sep $ml={9} />
        <Tool $ml={8}><Cyl pause /></Tool><Caret $ml={4} />
        <Tool $ml={9} $dim>{ToolIcons.refresh}</Tool><Caret $ml={5} $dim />
        <Sep $ml={9} />
        <Tool $ml={8}>{ToolIcons.swap}</Tool>
        <Tool $ml={7}>{ToolIcons.asc}</Tool>
        <Tool $ml={8}>{ToolIcons.desc}</Tool>
        <Tool $ml={8} $dim>{ToolIcons.clip}</Tool><Caret $ml={7} $dim />
        <AbcTool $ml={9}>Abc</AbcTool>
        <Sep $ml={5} />
        <Tool $ml={7}>{ToolIcons.fit}</Tool><Caret $ml={4} />
        <Select $ml={7} $w={85}>Normal<Chevron /></Select>
        <Tool $ml={6}>{ToolIcons.pin}</Tool>
        <Sep $ml={8} />
        <Tool $ml={9}>{ToolIcons.marker}</Tool><Caret $ml={6} />
        <Sep $ml={9} />
        <Tool $ml={8}>{ToolIcons.present}</Tool>
        <Sep $ml={9} />
      </ToolBar>
      <Body>
        <DataPane>
          <PaneHead $h={19} $bg="#dcdcdc" $bold>Data<Spacer />
            <svg width="7" height="10" fill="#56637a"><path d="M3.500 0L6.500 4H.5zM.5 6h6L3.500 10z" /></svg>
          </PaneHead>
          <SourceRow>
            <svg width="17" height="17"><path d="M.5 3v10q4 2 7 1M10.500 8V3" fill="none" stroke="#777" /><ellipse cx="5.500" cy="2.500" rx="5" ry="2" fill="#fff" stroke="#777" /><circle cx="11.500" cy="11" r="4.500" fill="#2f66b8" /><path d="M9.500 11l1.500 1.500 3-3.500" fill="none" stroke="#fff" strokeWidth="1.300" /></svg>
            raw_touch_data.csv (raw_tou...
          </SourceRow>
          <PaneHead $h={21} $bg="#e5e5e5">Dimensions<Spacer />
            <svg width="42" height="11"><path d="M0 1.500h12M0 4.500h12M0 7.500h12M0 10.500h12" stroke="#8a919c" strokeDasharray="3 1" /><circle cx="23" cy="4" r="3" fill="none" stroke={S} strokeWidth="1.500" /><path d="M21 6l-3 4" stroke={S} strokeWidth="2" /><path d="M34 2h8l-4 5z" fill={S} /></svg>
          </PaneHead>
          <FieldList $h={432}>
            <div>
              <Field $ls={-0.05}><FieldIcon $pl={8}><svg width="14" height="9" fill={BLUE}><path d="M0 7h1v2H0zM3 4h1.500v5H3zM6 0h1.500v9H6zM9 3h1.500v6H9zM12.500 7h1v2h-1z" /></svg></FieldIcon>Pitch (Degrees) (bin)</Field>
              {dims.map((d) => <Field key={d}><FieldIcon><Hash c={BLUE} /></FieldIcon>{d}</Field>)}
              <Field $i $ls={-0.15}><FieldIcon $pl={7} $c={BLUE}>Abc</FieldIcon>Measure Names</Field>
            </div>
          </FieldList>
          <PaneHead $h={21} $bg="#e5e5e5">Measures</PaneHead>
          <FieldList $h={431}>
            <div>
              {measures.map((m, i) => (
                <Field key={i} $i={i > 22} $ls={spacingOf(m)}><FieldIcon><Hash c="#1d8a62" eq={i === 23} /></FieldIcon>{m}</Field>
              ))}
            </div>
            <Track>
              <svg width="8" height="7"><path d="M1 6L4 2L7 6" fill="none" stroke="#555" strokeWidth="1.600" /></svg>
              <Thumb />
              <svg width="8" height="16"><path d="M1 9L4 13L7 9" fill="none" stroke="#555" strokeWidth="1.600" /></svg>
            </Track>
          </FieldList>
        </DataPane>
        <Canvas>
          <Work>
            <Shelves>
              <Card $h={55}><CardHead>Pages</CardHead></Card>
              <Card $h={67}><CardHead>Filters</CardHead></Card>
              <Card $h={200}>
                <CardHead>Marks</CardHead>
                <CardBody>
                  <Select $w={142} $pl={6}>
                    <SelectLabel>
                      <svg width="14" height="12" fill="#5b89ab"><path d="M0 4h3v8H0zM5 6h3v6H5zM10 0h3v12h-3z" /></svg>Automatic
                    </SelectLabel>
                    <Chevron />
                  </Select>
                  <MarkGrid>
                    <MarkButton $icon>
                      <svg width="17" height="17"><circle cx="5" cy="10.500" r="4" fill="#d9601a" /><circle cx="11" cy="10.500" r="4" fill="#f47d20" /><circle cx="8" cy="5" r="5" fill="#5b89ab" stroke="#fff" /></svg>Color
                    </MarkButton>
                    <MarkButton $icon>
                      <svg width="16" height="17"><circle cx="7" cy="8.500" r="5" fill="none" stroke={S} /><circle cx="10.500" cy="4" r="3" fill="none" stroke={S} /></svg>Size
                    </MarkButton>
                    <MarkButton $icon><AbcGlyph>Abc<br />123</AbcGlyph>Label</MarkButton>
                    <MarkButton>Detail</MarkButton>
                    <MarkButton>Tooltip</MarkButton>
                  </MarkGrid>
                </CardBody>
              </Card>
            </Shelves>
            <Main>
              <Shelf>
                <ShelfLabel><svg width="12" height="13" fill="#9aa1ab"><path d="M0 0h3v3H0zM4.500 0h3v3h-3zM9 0h3v3H9z" fill={S} /><path d="M0 4h3v9H0zM4.500 4h3v9h-3zM9 4h3v9H9z" /></svg>Columns</ShelfLabel>
                <Pill $bg="#c9daf4" $bd="#adc4e8">Student Id</Pill>
              </Shelf>
              <Shelf>
                <ShelfLabel><svg width="13" height="12" fill="#9aa1ab"><path d="M0 0h3v3H0zM0 4.500h3v3H0zM0 9h3v3H0z" fill={S} /><path d="M4.500 0H13v3H4.500zM4.500 4.500H13v3H4.500zM4.500 9H13v3H4.500z" /></svg>Rows</ShelfLabel>
                <Pill $bg="#bddfcb" $bd="#9fcdb2" $ls={0.1}>CNTD(Touch Id)</Pill>
              </Shelf>
              <Sheet>
                <BarChart w={1071} h={839} left={47.5} right={1067.5} top={24.5} base={815.5} unit={4.739} step={10} max={160} barW={45}
                  fill="#1f77b4" title="Student Id" axis="Distinct count of Touch Id" axisX={17} axisY={419} axisLen={122} labels={IDS} values={VALS} />
              </Sheet>
            </Main>
          </Work>
          <TabBar>
            <Tab $w={71}>Sheet 1</Tab>
            <Tab $w={113}><svg width="13" height="10"><path d="M.5 .5h12v9H.5zM6.500 0v10M0 5h13" fill="none" stroke={S} /></svg>Dashboard 1</Tab>
            <Tab $w={71}>Sheet 2</Tab>
            <Tab $w={71}>Sheet 3</Tab>
            <Tab $w={71} $on>Sheet 4</Tab>
            <Tab $w={32} $ml={4} $dark><svg width="16" height="13"><path d="M6 2.500h9v10H2.500V7" fill="none" stroke={S} /><path d="M5 8h1.500v4H5zM8 6h1.500v6H8zM11 7h1.500v5H11z" fill={S} /><path d="M0 3.500h6M3 .5v6" stroke={BLUE} strokeWidth="1.500" /></svg></Tab>
            <Tab $w={32} $dark><svg width="16" height="13"><path d="M6 2.500h9v10H2.500V7M9 3v9M3 7.500h12" fill="none" stroke={S} /><path d="M0 3.500h6M3 .5v6" stroke={BLUE} strokeWidth="1.500" /></svg></Tab>
          </TabBar>
        </Canvas>
      </Body>
      <Status>
        <StatusCell $w={71} $pl={3}>17 marks</StatusCell>
        <StatusCell $w={130}>1 row by 17 columns</StatusCell>
        <StatusCell $w={1397}>SUM of CNTD(Touch Id): 2,075</StatusCell>
        <StatusCell $w={127} $line /><StatusCell $w={27} $line /><StatusCell $w={27} $line /><StatusCell $w={47} $line />
        <StatusCell $w={71} $line $pl={8}>
          <svg width="56" height="7" fill="#a9a9a9"><path d="M0 0h1v7H0zM6 0v7L2 3.500zM21 0v7l-4-3.500zM33 0v7l4-3.500zM48 0v7l4-3.500zM53 0h1v7h-1z" /></svg>
        </StatusCell>
        <StatusCell $w={22} $line $pl={8}><svg width="6" height="8" fill="#444f60"><path d="M3 0L6 3.500H0zM0 4.500h6L3 8z" /></svg></StatusCell>
      </Status>
      <Bar $bg="linear-gradient(90deg,#5b4b40 0,#594a3e 1200px,#5b4b40 1360px,#6d4c40 1410px,#8a7a66 1460px)">
        <Scenery>
          <svg width="520" height="40">
            <defs>
              <linearGradient id="lake" x1="0" x2="1">
                <stop offset="0" stopColor="#8c7c66" /><stop offset=".2" stopColor="#98836e" /><stop offset=".42" stopColor="#a17c66" />
                <stop offset=".62" stopColor="#b28e62" /><stop offset=".75" stopColor="#a9835a" /><stop offset="1" stopColor="#956e55" />
              </linearGradient>
            </defs>
            <rect x="48" width="472" height="40" fill="url(#lake)" />
            <path d="M0 0H18V40H0z" fill="#6b4b3e" /><path d="M16 0H51Q54 20 50 40H24Q26 30 16 0z" fill="#a67d4a" />
            <path d="M36 0Q40 25 38 40M18 16Q28 22 50 12" stroke="#7d5a37" fill="none" />
            <path d="M60 8Q90 2 120 10T180 8M90 25Q150 15 200 26T300 20M230 8Q280 2 330 12T430 10M320 30Q380 22 420 32T510 26M420 12Q470 20 518 10" stroke="#c3a283" strokeWidth="2" opacity=".35" fill="none" />
            <path d="M78 40V30M72 27L78 33L84 26M99 40V28M93 36L99 32L104 37" stroke="#54523a" strokeWidth="1.500" fill="none" /><circle cx="101" cy="25" r="3.500" fill="#c9746a" />
          </svg>
        </Scenery>
        <StartSlot $w={52}>{I.win}</StartSlot>
        <Apps />
      </Bar>
      <ShowMe>
        <ShowMeHead>
          <svg width="36" height="14" fill="#9fb0bf"><path d="M0 0h1v1H0zM0 4h1v1H0zM4 4h1v1H4zM0 8h1v1H0zM4 8h1v1H4zM8 8h1v1H8zM0 12h1v1H0zM4 12h1v1H4zM8 12h1v1H8zM12 12h1v1h-1z" /></svg>
          <svg width="17" height="17"><path d="M1 5h3v10H1z" fill="#c79a12" /><path d="M5 1h3v14H5z" fill="#9c2016" /><path d="M9 4h3v11H9z" fill="#1d9e2e" /><path d="M13 7h3v8h-3z" fill="#2c45e0" /><path d="M0 15.500h17" stroke="#555" /></svg>
          Show Me
        </ShowMeHead>
        <Thumbs>
          {THUMBS.map(([state, art], i) => <ThumbBox key={i} $state={state}>{art}</ThumbBox>)}
        </Thumbs>
        <Help>
          <div>For <b>horizontal bars</b> try</div>
          <HelpLine>0 or more <Mark $bg="#dbeafc">dimensions</Mark></HelpLine>
          <HelpLine>1 or more <Mark $bg="#cff0dc">measures</Mark></HelpLine>
        </Help>
      </ShowMe>
    </Monitor>
  );
}

const smallGmail = <svg width="15" height="12"><path d="M0 0h15v12H0z" fill="#f3f3f3" /><path d="M1 12V1l6.500 6L14 1v11" fill="none" stroke="#d5423b" strokeWidth="2.200" /></svg>;
const bookmarks = [
  ["Apps", 61, <svg width="14" height="14">{rects([[0, 0, 4, 4, "#db4437"], [5, 0, 4, 4, "#db4437"], [10, 0, 4, 4, "#f4b400"], [0, 5, 4, 4, "#0f9d58"], [5, 5, 4, 4, "#4285f4"], [10, 5, 4, 4, "#f4b400"], [0, 10, 4, 4, "#0f9d58"], [5, 10, 4, 4, "#0f9d58"], [10, 10, 4, 4, "#f4b400"]])}</svg>],
  ["", 29, <Tile $bg="#3b5998">f</Tile>],
  ["", 27, <Tile $bg="transparent" $c="#d3121a" $font={`900 15px/16px ${arial}`}>N</Tile>],
  ["Inbox - jumc8905@c...", 149, smallGmail],
  ["", 28, <Tile $bg="#2a7c96" $r={8} $font={`700 10px/15px ${ui}`}>M</Tile>],
  ["", 28, <svg width="16" height="16"><path d="M0 0h16v16H0z" fill="#3c3550" /><path d="M0 9h16v7H0z" fill="#d64a5a" /><circle cx="8" cy="7" r="4.500" fill="#b58aa0" /><path d="M2 11h12M4 14h8" stroke="#f2c0c4" /></svg>],
  ["", 28, <svg width="16" height="16"><circle cx="8" cy="8" r="7" fill="#efe4f5" stroke="#54108a" strokeWidth="1.800" /><path d="M8 1v14M8 8l-5 5M8 8l5 5" stroke="#54108a" strokeWidth="1.800" /></svg>],
  ["VODS", 63, <svg width="16" height="16"><path d="M0 0h16v16H0z" fill="#cfe3f8" /><ellipse cx="8" cy="9.500" rx="6.500" ry="4.800" fill="#fff" stroke="#333" /><circle cx="5.500" cy="8.500" r="1.500" fill="#f04a23" /><circle cx="10.500" cy="8.500" r="1.500" fill="#f04a23" /><path d="M5 12q3 1.500 6 0M8 4.500l1-3 3 .5" fill="none" stroke="#333" /></svg>],
  ["michaela", 81, <FolderFav />],
  ["QSC", 56, <FolderFav />],
  ["note", 57, <Tile $bg="#fff" $c="#f09a3c" $r={0} $font={`400 9px/16px ${ui}`}>xda</Tile>],
  ["School", 69, <FolderFav />],
  ["Programming", 108, <FolderFav />],
  ["", 27, <svg width="15" height="16"><circle cx="7.500" cy="8" r="5.500" fill="#3f78d8" stroke="#3f78d8" strokeWidth="3" strokeDasharray="3 1.500" /><circle cx="7.500" cy="8" r="4" fill="#f5c93a" /><path d="M7.500 3v4" stroke="#3f78d8" strokeWidth="2.500" /></svg>],
  ["cooking", 76, <FolderFav />],
  ["Photos", 70, <Tile $bg="#dc4a38" $font={`700 12px/14px "Liberation Serif", serif`}>g+</Tile>],
  ["Chase", 65, <svg width="16" height="16"><rect width="16" height="16" fill="#fff" /><path d="M5 0h6l5 5v6l-5 5H5L0 11V5z" fill="#155ca8" /><path d="M5 5h6v6H5z" fill="#fff" /><path d="M5 0v5M16 5h-5M11 16v-5M0 11h5" stroke="#fff" /></svg>],
  ["Parsing image for pr...", 150, <Tile $bg="#4a80f0" $font={`400 14px/14px "Liberation Serif", serif`}>g</Tile>],
];
const N = "#555";

function BrowserWindow() {
  return (
    <Monitor>
      <TabStrip>
        <ChromeTab>
          <svg width="206" height="24"><path d="M0 24Q4 23 6 17L9 5Q11 1 15 .5H187Q191 1 193 5L198 18Q200 23 204 24z" fill="#f8f8f8" stroke="#a5a5a5" /><path d="M3 24H202" stroke="#f8f8f8" strokeWidth="2" /></svg>
          <TabBadge>M</TabBadge>
          <TabText>Big Data Hackathons | Uni</TabText>
          <TabX width="8" height="8"><path d="M1 1l6 6M7 1L1 7" stroke="#555" strokeWidth="1.700" /></TabX>
        </ChromeTab>
        <svg width="32" height="20"><path d="M0 3Q0 .5 3 .5H22Q25 1 26 4L30 13Q30 15.500 28 15.500H8Q5 15 4 12z" fill="#d5dce6" stroke="#c3c8d0" /></svg>
        <WindowControls bg="#bcbcbc" />
      </TabStrip>
      <NavBar>
        <Nav $w={30}><svg width="17" height="15"><path d="M16 7.500H3M8.500 1.500L2.500 7.500L8.500 13.500" fill="none" stroke={N} strokeWidth="3" /></svg></Nav>
        <Nav $w={28}><svg width="17" height="15"><path d="M0 7.500H13M8 1.500L14 7.500L8 13.500" fill="none" stroke="#c4c4c4" strokeWidth="2.600" /></svg></Nav>
        <Nav $w={30}><svg width="17" height="16"><path d="M13.500 10.500A6 6 0 1 1 12 3.500" fill="none" stroke={N} strokeWidth="2.600" /><path d="M15.500 0v7h-7z" fill={N} /></svg></Nav>
        <Nav $w={27}><svg width="16" height="16"><path d="M8 0l8 8h-2v8H9.500v-5h-3v5H2V8H0zM12 1h2v4h-2z" fill={N} /></svg></Nav>
        <Omni>
          <svg width="12" height="16"><path d="M.5 .5h7l4 4v11H.5zM7.500 .5v4h4" fill="#fdfdfd" stroke="#8a8a8a" /></svg>
          <div>csci-4830-002-2014.github.io<Muted>/units/ml_2/</Muted></div>
          <Spacer />
          <svg width="19" height="18"><path d="M9.500 1l2.300 5.700 6 .4-4.600 3.900 1.500 6-5.200-3.300L4.300 17l1.500-6L1.200 7.100l6-.4z" fill="#fff" stroke="#8c8c8c" /></svg>
        </Omni>
        <Nav $w={9} />
        <Nav $w={32}><svg width="18" height="18"><rect width="18" height="18" rx="2.500" fill="#a80d1e" /><path d="M9 3v12M3.800 6l10.400 6M14.200 6L3.800 12" stroke="#f2e9ea" strokeWidth="2.600" /></svg></Nav>
        <Nav $w={32}><svg width="19" height="19"><circle cx="9.500" cy="9.500" r="9.500" fill="#339a48" /><path d="M5 5h1.500v9H5zM8 5h3q4 .5 4 4.500t-4 4.500H8z" fill="#fff" /></svg></Nav>
        <Nav $w={32}><svg width="20" height="16"><path d="M1.500 6V1.500h17v12H9" fill="none" stroke="#666" strokeWidth="1.600" /><path d="M0 8a7 7 0 0 1 7 7M0 11a4 4 0 0 1 4 4" fill="none" stroke="#666" strokeWidth="1.300" /><circle cx="1" cy="14.500" r="1.300" fill="#666" /></svg></Nav>
        <Nav $w={36}><svg width="20" height="19"><path d="M6 .5h8l5 5v8l-5 5H6l-5-5v-8z" fill="#fff" stroke="#888" /><path d="M6.500 2h7l4 4v7l-4 4h-7l-4-4V6z" fill="#dc1a12" /><path d="M7 9V5.500M9 9V4M11 9V4M13 9V5.500M6.500 9h7v3q-1 2.500-3.500 2.500T6.500 11z" fill="#fff" stroke="#fff" /></svg></Nav>
        <svg width="14" height="13"><path d="M0 1.500h14M0 6.500h14M0 11.500h14" stroke="#555" strokeWidth="2.600" /></svg>
      </NavBar>
      <Bookmarks>
        {bookmarks.map(([t, w, icon], i) => (
          <Bookmark key={i} $w={w}><Fav>{icon}</Fav>{t}</Bookmark>
        ))}
      </Bookmarks>
      <Viewport>
        <Article>
          <Figure $w={218} $h={210} $pt={0} $cut>
            <Shot $p="0 0 7px 4px" $line>
              <Paper $w={168}>
                <BarChart w={168} h={195} left={44.5} right={164.5} top={-20} base={171.5} unit={278} step={0.2} max={0.6} barW={45} fill="#1a77b7"
                  axis="Avg. Pitch (Degrees)" axisX={18} axisY={36} axisLen={102} labels={[0, 1]} values={[0.7, 0.7]} fmt={(v) => v.toFixed(1)} />
              </Paper>
            </Shot>
          </Figure>
          <H4>d. How many unique touch events did students have?</H4>
          <Figure $w={749} $h={436} $pt={6}>
            <Shot $p="2px">
              <Paper $w={731}>
                <BarChart w={731} h={418} left={46.5} right={726.5} top={24.500} base={394.5} unit={2.2155} step={20} max={160} barW={30}
                  fill="#1a77b7" title="Student Id" axis="Distinct count of Touch Id" axisX={16} axisY={208} axisLen={123} labels={IDS} values={VALS} />
              </Paper>
            </Shot>
          </Figure>
          <H3>Challenge 2</H3>
          <Para>
            The second challenge is open ended. Write your own analysis of this data. Keep the analysis<br />
            short (300 words max). Include visualizations to support your analysis.
          </Para>
          <Para>(As a heads up, we will do some simple classifier training on this data next week).</Para>
        </Article>
        <PageScroll>
          <svg width="8" height="5"><path d="M4 0l4 5H0z" fill="#444" /></svg>
          <PageThumb />
          <Spacer />
          <svg width="8" height="5"><path d="M0 0h8L4 5z" fill="#444" /></svg>
        </PageScroll>
        <ToTop><svg width="16" height="11"><path d="M2 9L8 3L14 9" fill="none" stroke="#fff" strokeWidth="4" /></svg></ToTop>
      </Viewport>
      <Downloads>
        <DownloadItem>
          <svg width="17" height="17"><path d="M3 1h11l2 3v2H3z" fill="#9c1f4c" /><path d="M3 6h13v5H3z" fill="#2a52b0" /><path d="M3 11h13v5H3z" fill="#1b8a4a" /><path d="M1 2h3v14H1z" fill="#4a2c2c" /><path d="M8 0h3v17H8z" fill="#c9a54a" opacity=".6" /></svg>
          <DownloadName>raw_touch_data.xls.zip</DownloadName>
          <DownloadMore><Caret $ml={0} /></DownloadMore>
        </DownloadItem>
        <Spacer />
        <svg width="10" height="12"><path d="M3 0h4v6h3l-5 6-5-6h3z" fill="#666" /></svg>
        <ShowAll>Show all downloads...</ShowAll>
        <svg width="8" height="8"><path d="M1 1l6 6M7 1L1 7" stroke="#555" strokeWidth="1.600" /></svg>
      </Downloads>
      <Bar $bg="linear-gradient(90deg,#b3a494 0,#a89684 90px,#7d6c5e 170px,#75604f 340px,#6c5a4c 470px,#837970 510px,#6e5b4c 560px,#8a7a6b 640px,#8d7c6e 700px,#6a5646 790px,#7a6a5c 900px,#60544b 950px,#565a60 960px,#5b4a3e 990px,#6a5646 1100px,#6b5949 1200px,#776657 1330px)">
        <Scenery>
          <svg width="1920" height="40">
            <defs><linearGradient id="sand" x1="0" x2="1"><stop offset="0" stopColor="#bdac9c" /><stop offset=".6" stopColor="#b3a090" /><stop offset="1" stopColor="#9d8b7b" /></linearGradient></defs>
            <path d="M1222 0H1920V40H1332Q1290 18 1222 0z" fill="url(#sand)" />
            <path d="M500 0h30l20 40h-30z" fill="#8d8983" opacity=".6" />
            <path d="M770 0Q790 20 785 40M800 0Q810 15 805 40" stroke="#8a7562" opacity=".5" fill="none" />
            <path d="M0 0h110L60 40H0z" fill="#b5a898" opacity=".5" />
          </svg>
        </Scenery>
        <StartSlot $w={51} $lit>{I.win}</StartSlot>
        <Apps text />
        <Tray>
          <Battery>A/C</Battery><BatteryTip />
          <TrayIcon $mr={12}><svg width="10" height="6"><path d="M5 .5L9 5.500H1z" fill="#fff" stroke="#666" /></svg></TrayIcon>
          <TrayIcon $mr={7}><svg width="17" height="17"><path d="M4 0l4 3-4 3-4-3zM12 0l4 3-4 3-4-3zM4 6l4 3-4 3-4-3zM12 6l4 3-4 3-4-3zM4 12.500L8 10l4 2.500L8 15z" fill="#7fc3f0" stroke="#2b78b5" strokeWidth=".6" /><circle cx="12.500" cy="12.500" r="4" fill="#3aa335" /><path d="M10.500 12.500l1.500 1.500 2.500-3" stroke="#fff" fill="none" /></svg></TrayIcon>
          <TrayIcon $mr={7}><svg width="17" height="12" fill="#fff" stroke="#666" strokeWidth=".6"><path d="M1 9h2v3H1zM4 7h2v5H4zM7 5h2v7H7zM10 3h2v9h-2zM13 .5h2.500V12H13z" /></svg></TrayIcon>
          <TrayIcon $mr={15}><svg width="17" height="14"><path d="M1 4.500h2.500L7 1v12L3.500 9.500H1z" fill="#fff" stroke="#666" strokeWidth=".6" /><path d="M9 4.500q2 2.500 0 5M11.500 3q3 4 0 8M14 1.500q4 5.500 0 11" stroke="#fff" fill="none" /></svg></TrayIcon>
          <Clock>11:40 AM<br />11/1/2014</Clock>
        </Tray>
      </Bar>
    </Monitor>
  );
}

export default function App() {
  return (
    <>
      <Global />
      <Desktop>
        <TableauWindow />
        <BrowserWindow />
      </Desktop>
    </>
  );
}
